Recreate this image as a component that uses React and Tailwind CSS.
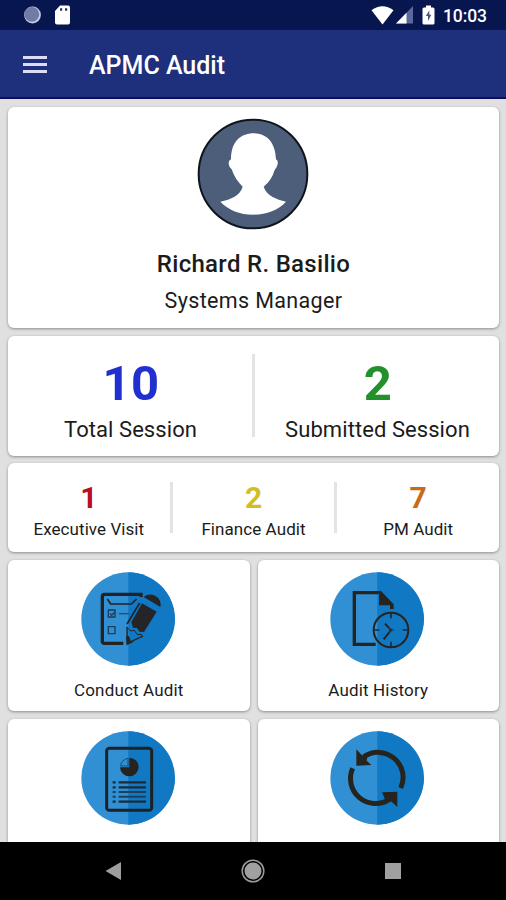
import React from "react";

const card = "rounded-[6px] bg-white shadow-[0_1px_3px_rgba(0,0,0,0.38)]";

function StatusBar() {
  return (
    <div className="flex h-[30px] shrink-0 items-center bg-[#081650] pl-[23px] pr-[19px] text-white">
      <svg className="h-[18px] w-[18px]" viewBox="0 0 18 18">
        <circle cx="9.5" cy="9" r="8.4" fill="#c5cce0" />
        <circle cx="8.8" cy="8.3" r="7.4" fill="#707ca6" />
      </svg>
      <svg className="ml-[13px] h-[20px] w-[17px]" viewBox="0 0 17 20">
        <path d="M6 .5h8q2 0 2 2v15q0 2-2 2H3q-2 0-2-2V6z" fill="#fff" />
        <path d="M6 3.2h2.200v2.600H6zM11 3.2h2.200v2.600H11z" fill="#283363" />
      </svg>
      <div className="grow" />
      <svg className="h-[19px] w-[23px]" viewBox="0 0 23 19">
        <path d="M0.5 4.2Q11.500 -3.500 22.500 4.200L11.500 18.500z" fill="#fff" />
      </svg>
      <svg className="ml-[1px] h-[18px] w-[19px]" viewBox="0 0 19 18">
        <path d="M18 0v17.500H1z" fill="#5c679a" />
        <path d="M11.500 6.700v10.800H1z" fill="#fff" />
      </svg>
      <svg className="ml-[8px] h-[20px] w-[13px]" viewBox="0 0 13 20">
        <path d="M4 .5h5v2h2q1.500 0 1.500 1.500v14q0 1.500-1.500 1.500H2Q.5 19.500 .5 18V4Q.5 2.500 2 2.500h2z" fill="#fff" />
        <path d="M7.300 5.500L3.800 11h2.200V16L9.300 9.800H7.300z" fill="#4a5480" />
      </svg>
      <span className="ml-[8px] mt-[2px] w-[44px] whitespace-nowrap text-[17.500px] font-medium leading-[28px] tracking-[-0.1px]">10:03</span>
    </div>
  );
}

function AppBar() {
  return (
    <header className="flex h-[69px] shrink-0 items-center border-b-2 border-[#100c63] bg-[#1e2f7b] pl-[23px] pt-[1px]">
      <div className="flex w-[24px] flex-col gap-[4px]">
        <span className="h-[3px] bg-[#dcdcf4]" />
        <span className="h-[3px] bg-[#dcdcf4]" />
        <span className="h-[3px] bg-[#dcdcf4]" />
      </div>
      <h1 className="ml-[42px] mt-[4px] whitespace-nowrap text-[25px] font-medium leading-[32px] text-white">APMC Audit</h1>
    </header>
  );
}

function Avatar() {
  return (
    <svg className="mr-px h-[112px] w-[112px]" viewBox="142 38 336 336">
      <circle cx="310" cy="206" r="163" fill="#4c5e7a" stroke="#10151c" strokeWidth="6" />
      <path
        d="M312 84C350 84 377 110 379 162Q386 166 384 176Q382 187 375 194Q366 225 342 244C350 270 380 282 409 289C386 314 350 328 311 328C270 328 236 314 212 289C244 282 272 270 279 244Q256 222 246 192Q238 185 237 175Q236 166 244 162C244 110 272 84 312 84z"
        fill="#fff"
      />
    </svg>
  );
}

function Disc({ x, y }) {
  return (
    <>
      <circle cx={x} cy={y} r="140" fill="#318fd3" />
      <path d={`M${x + 1} ${y - 140}a140 140 0 0 1 0 280z`} fill="#1178c4" />
    </>
  );
}

function ConductIcon() {
  return (
    <svg className="mr-[2px] h-[94px] w-[94px]" viewBox="33 36 282 282">
      <Disc x={174} y={177} />
      <g fill="none" stroke="#222224">
        <path d="M213 111V103H104Q97 103 97 110V243Q97 250 104 250H160" strokeWidth="10" />
        <path d="M112 117L122 132H184L200 117" strokeWidth="5" />
        <path d="M115 150h20v21h-20zM115 200h20v21h-20z" stroke="#1b3d59" strokeWidth="4" />
        <path d="M120 160l5 6 10-10" stroke="#1b3d59" strokeWidth="4" />
        <path d="M147 161h31" stroke="#1d5178" strokeWidth="4" />
        <path d="M209 129L171 192" strokeWidth="5" />
        <path d="M171 200L172 250L217 229" strokeWidth="4" />
        <path d="M172 203L182 213L193 211L202 224L214 223L219 231" strokeWidth="3" />
      </g>
      <g fill="#252427">
        <path d="M221 111C238 96 264 104 271 126Q273 134 271 141z" />
        <path d="M216 130L260 155L222 216L208 215L201 204L189 203L184 186z" />
        <path d="M168 228L177 229L182 242L192 245L170 256z" />
      </g>
    </svg>
  );
}

function HistoryIcon() {
  return (
    <svg className="mr-[2px] h-[94px] w-[94px]" viewBox="47 36 282 282">
      <Disc x={188} y={177} />
      <path d="M192 98H120V253H184" fill="none" stroke="#26241f" strokeWidth="10" />
      <path d="M190 93H200L238 133V147H227V136H194V104z" fill="#26241f" />
      <circle cx="230" cy="210" r="52" fill="none" stroke="#26241f" strokeWidth="6" />
      <g fill="none" stroke="#26241f" strokeWidth="5">
        <path d="M230 160v15M230 245v15M180 210h15M265 210h15" />
        <path d="M212 191L230 210L208 238" strokeWidth="6" />
        <path d="M222 203L240 210L224 217" stroke="#1b4f7a" strokeWidth="3" />
      </g>
    </svg>
  );
}

function ReportIcon() {
  return (
    <svg className="mr-[2px] h-[94px] w-[94px]" viewBox="33 47 282 282">
      <Disc x={174} y={188} />
      <rect x="110" y="99" width="135" height="186" rx="8" fill="none" stroke="#1c2123" strokeWidth="9" />
      <path d="M178 156V127A28 28 0 1 1 150 156z" fill="#26241f" />
      <path d="M152 152A25 25 0 0 1 174 129V152z" fill="none" stroke="#1e4a70" strokeWidth="3" />
      <g fill="none" strokeWidth="7" stroke="#1c2b35">
        <path d="M128 201h9M146 201h82M128 216h9M146 216h82M128 259h9M146 259h82" />
        <path d="M128 230h9M146 230h82M128 244h9M146 244h82" stroke="#1b405d" strokeWidth="6" />
      </g>
    </svg>
  );
}

function SyncIcon() {
  return (
    <svg className="mr-[2px] h-[94px] w-[94px]" viewBox="47 47 282 282">
      <Disc x={188} y={188} />
      <g fill="none" stroke="#26241f" strokeWidth="15">
        <path d="M149 124A75 75 0 0 1 259 218" />
        <path d="M115 159A75 75 0 0 0 225 252" />
      </g>
      <path d="M126 102V151L171 149L157 136L160 120H143zM249 229V275L232 259L214 257L203 231z" fill="#26241f" />
    </svg>
  );
}

function Stat({ value, label, color, big }) {
  return (
    <div className="flex flex-1 flex-col items-center whitespace-nowrap">
      <span
        className={`${color} ${big ? "mt-[19px] h-[58px] pl-[2px] text-[49px] leading-[58px] tracking-[0.5px]" : "mt-[17px] h-[36px] text-[30px] leading-[36px]"} font-bold`}
      >
        {value}
      </span>
      <span className={big ? "mt-[3px] pl-px text-[22px] leading-[28px] tracking-[0.07px]" : "mt-[2px] text-[17px] leading-[22px] tracking-[0.07px]"}>
        {label}
      </span>
    </div>
  );
}

function Tile({ icon, label }) {
  return (
    <div className={`${card} flex h-[151px] flex-col items-center pt-[12px]`}>
      {icon}
      <span className="mt-[13px] whitespace-nowrap text-[17px] leading-[22px] tracking-[0.15px]">{label}</span>
    </div>
  );
}

export default function App() {
  return (
    <div className="flex h-[900px] w-[506px] flex-col overflow-hidden bg-[#e0e0e0] font-[Roboto,sans-serif] text-[#1b1b1b]">
      <StatusBar />
      <AppBar />
      <main className="flex h-[743px] shrink-0 flex-col overflow-hidden pl-[8px] pr-[7px] pt-[8px]">
        <section className={`${card} flex h-[221px] shrink-0 flex-col items-center pt-[11px]`}>
          <Avatar />
          <h2 className="mt-[18px] text-[24px] font-medium leading-[32px] tracking-[0.3px]">Richard R. Basilio</h2>
          <p className="mt-[8px] text-[21.500px] leading-[26px] tracking-[0.35px]">Systems Manager</p>
        </section>
        <section className={`${card} mt-[8px] flex h-[120px] shrink-0`}>
          <Stat big value="10" label="Total Session" color="text-[#2030d0]" />
          <span className="mt-[18px] h-[83px] w-[3px] bg-[#e3e3e3]" />
          <Stat big value="2" label="Submitted Session" color="text-[#23912b]" />
        </section>
        <section className={`${card} mt-[7px] flex h-[89px] shrink-0`}>
          <Stat value="1" label="Executive Visit" color="text-[#b90f20]" />
          <span className="mt-[19px] h-[51px] w-[3px] bg-[#e3e3e3]" />
          <Stat value="2" label="Finance Audit" color="text-[#d4bd22]" />
          <span className="mt-[19px] h-[51px] w-[3px] bg-[#e3e3e3]" />
          <Stat value="7" label="PM Audit" color="text-[#c96a17]" />
        </section>
        <section className="mt-[8px] grid shrink-0 grid-cols-2 gap-[8px]">
          <Tile icon={<ConductIcon />} label="Conduct Audit" />
          <Tile icon={<HistoryIcon />} label="Audit History" />
          <Tile icon={<ReportIcon />} />
          <Tile icon={<SyncIcon />} />
        </section>
      </main>
      <nav className="flex h-[58px] shrink-0 items-center justify-between bg-black pl-[105px] pr-[105px]">
        <svg className="h-[18px] w-[16px]" viewBox="0 0 16 18">
          <path d="M16 0v18L.5 9z" fill="#9e9e9e" />
        </svg>
        <svg className="h-[24px] w-[24px]" viewBox="0 0 24 24">
          <circle cx="12" cy="12" r="10.800" fill="none" stroke="#9a9a9a" strokeWidth="1.500" />
          <circle cx="12" cy="12" r="8.500" fill="#a0a0a0" />
        </svg>
        <span className="h-[16px] w-[16px] bg-[#a0a0a0]" />
      </nav>
    </div>
  );
}
